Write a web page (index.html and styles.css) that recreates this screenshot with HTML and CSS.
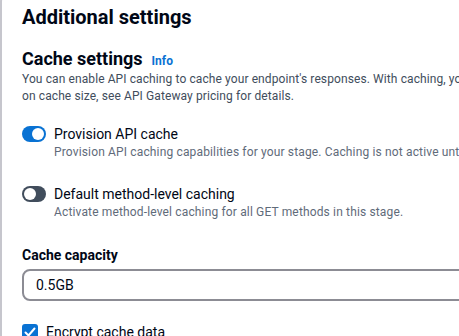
FILE: index.html
```html
<!DOCTYPE html>
<html lang="en">
<head>
    <meta charset="UTF-8">
    <meta name="viewport" content="width=device-width, initial-scale=1.0">
    <title>Additional settings</title>
    <link rel="stylesheet" href="styles.css">
</head>
<body>
    <div class="card">
        <h2 class="title">Additional settings</h2>

        <div class="section-head">
            <h3>Cache settings</h3>
            <a class="info" href="#">Info</a>
        </div>
        <p class="section-desc">You can enable API caching to cache your endpoint's responses. With caching, you can reduce the number of calls made to your endpoint. For more information<br>on cache size, see API Gateway pricing for details.</p>

        <div class="toggle-row">
            <span class="toggle on"></span>
            <div>
                <div class="label">Provision API cache</div>
                <div class="hint">Provision API caching capabilities for your stage. Caching is not active until the cache is provisioned.</div>
            </div>
        </div>

        <div class="toggle-row">
            <span class="toggle"></span>
            <div>
                <div class="label">Default method-level caching</div>
                <div class="hint">Activate method-level caching for all GET methods in this stage.</div>
            </div>
        </div>

        <div class="field">
            <div class="field-label">Cache capacity</div>
            <div class="select">0.5GB</div>
        </div>

        <div class="check-row">
            <span class="checkbox">
                <svg width="16" height="16" viewBox="0 0 16 16"><path d="M3.5 8.5l3 3 6-7" fill="none" stroke="#fff" stroke-width="2" stroke-linecap="round" stroke-linejoin="round"/></svg>
            </span>
            <span class="label">Encrypt cache data</span>
        </div>
    </div>
</body>
</html>
```

FILE: styles.css
```css
body {
    margin: 0;
    font-family: Roboto, 'Open Sans', sans-serif;
    color: #000716;
    background: #fff;
    overflow: hidden;
}
.card {
    margin-top: -14px;
    border-left: 2px solid #c6c6cd;
    border-top: 2px solid #c6c6cd;
    border-top-left-radius: 16px;
    padding: 16px 0 0 20px;
    white-space: nowrap;
}
.title {
    margin: 0;
    font-size: 20px;
    line-height: 26px;
    font-weight: 700;
}
.section-head {
    display: flex;
    align-items: baseline;
    gap: 9px;
    margin-top: 17px;
}
.section-head h3 {
    margin: 0;
    font-size: 18px;
    line-height: 24px;
    font-weight: 700;
}
.info {
    color: #0972d3;
    font-size: 12px;
    font-weight: 700;
    text-decoration: none;
}
.section-desc {
    margin: 0;
    font-size: 12px;
    line-height: 17px;
    letter-spacing: 0.1px;
    color: #414d5c;
}
.toggle-row {
    display: flex;
    gap: 8px;
    margin-top: 19px;
}
.toggle-row + .toggle-row {
    margin-top: 23px;
}
.toggle {
    flex: none;
    width: 24px;
    height: 16px;
    margin-top: 2px;
    border-radius: 8px;
    background: #414d5c;
    position: relative;
}
.toggle::after {
    content: "";
    position: absolute;
    top: 2px;
    left: 2px;
    width: 12px;
    height: 12px;
    border-radius: 50%;
    background: #fff;
}
.toggle.on {
    background: #0972d3;
}
.toggle.on::after {
    left: 10px;
}
.label {
    font-size: 14px;
    line-height: 20px;
}
.hint {
    font-size: 12px;
    line-height: 17px;
    letter-spacing: 0.15px;
    color: #5f6b7a;
}
.field {
    margin-top: 24px;
}
.field-label {
    font-size: 14px;
    line-height: 20px;
    font-weight: 700;
}
.select {
    margin-top: 4px;
    height: 28px;
    border: 2px solid #8c8c94;
    border-radius: 8px;
    padding: 0 12px;
    font-size: 14px;
    line-height: 28px;
    width: 500px;
}
.check-row {
    display: flex;
    align-items: center;
    gap: 8px;
    margin-top: 21px;
}
.checkbox {
    width: 16px;
    height: 16px;
    border-radius: 3px;
    background: #0972d3;
    display: flex;
}
```
